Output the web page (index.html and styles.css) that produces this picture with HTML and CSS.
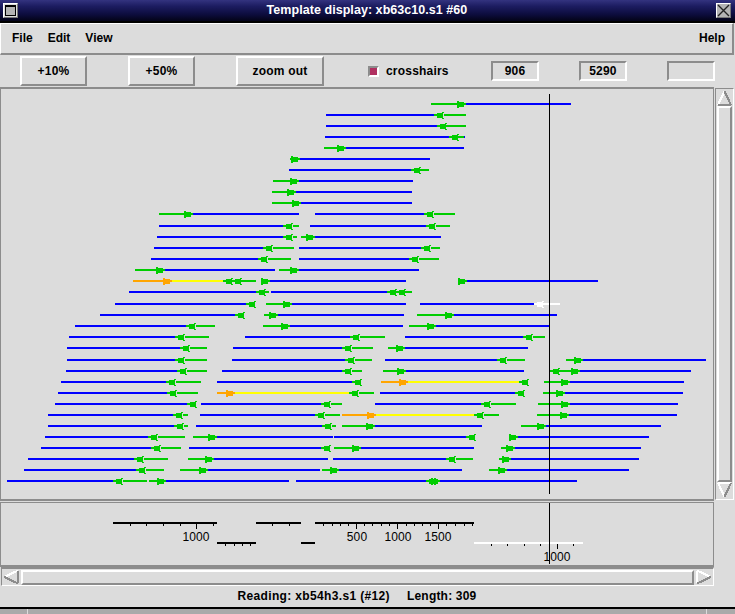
FILE: index.html
```html
<!DOCTYPE html>
<html lang="en">
<head>
<meta charset="utf-8">
<title>Template display: xb63c10.s1 #60</title>
<link rel="stylesheet" href="styles.css">
</head>
<body>
<div class="win">
  <header class="title">
    <span class="wm-btn"><span class="wm-box"></span></span>
    <span class="title-text">Template display: xb63c10.s1 #60</span>
    <span class="wm-close"><svg class="wm-x" viewBox="0 0 13 13"><path d="M1 1L12 12M12 1L1 12"/></svg></span>
  </header>
  <nav class="menu">
    <span class="mi">File</span><span class="mi">Edit</span><span class="mi">View</span>
    <span class="mi help">Help</span>
  </nav>
  <div class="tools">
    <button class="btn b1">+10%</button>
    <button class="btn b1">+50%</button>
    <button class="btn b2">zoom out</button>
    <span class="check"></span>
    <span class="check-label">crosshairs</span>
    <span class="entry">906</span>
    <span class="entry">5290</span>
    <span class="entry"></span>
  </div>
  <div class="main">
    <div class="canvas">
      <div class="plotframe">
      <svg class="plot" viewBox="1 89 712 410" width="712" height="410">
        <defs>
          <path id="r" d="M-9-3H-7V-2H-2V-1H0V1H-2V3H-7V4H-9Z"/>
          <path id="l" d="M0-1H3V-2H8V-3H10V-2H9V3H10V4H8V3H3V1H0Z"/>
        </defs>
        <path class="ln blue" d="M466 104H571M326 115H436M326 126H439M325 137H465M346 148H464M300 159H430M289 170H412M299 181H413M296 192H412M301 203H412M193 214H299M315 214H426M159 226H285M310 226H428M157 237H285M315 237H441M154 248H265M299 248H423M151 259H260M299 259H411M165 270H275M299 270H419M270 281H406M467 281H598M129 292H258M271 292H389M115 304H248M292 304H406M420 304H536M100 315H237M278 315H404M454 315H557M75 326H188M290 326H403M436 326H549M69 337H177M245 337H352M405 337H525M67 348H182M233 348H344M405 348H528M67 360H177M232 360H347M385 360H499M583 360H706M66 371H179M222 371H344M406 371H524M580 371H691M61 382H168M217 382H354M570 382H684M58 393H169M380 393H517M565 393H683M55 404H189M201 404H323M375 404H483M570 404H678M48 415H175M200 415H317M569 415H677M48 426H176M196 426H324M375 426H482M546 426H661M45 437H150M217 437H333M334 437H468M518 437H649M41 448H153M189 448H323M361 448H474M515 448H641M28 459H136M214 459H328M333 459H448M511 459H639M24 470H138M208 470H320M339 470H462M507 470H629M7 481H115M166 481H289M296 481H577"/>
        <path class="ln yellow" d="M172 281H225M235 393H351M408 382H521M376 415H476"/>
        <path class="ln white" d="M536 304H560"/>
        <path class="ln orange" d="M133 281H165M217 393H228M381 382H401M342 415H369"/>
        <path class="ln green" d="M431 104H458M444 115H466M445 126H466M457 137H464M324 148H339M290 159H292M419 170H429M273 181H291M272 192H288M272 203H293M159 214H185M434 214H455M293 226H299M436 226H450M293 237H297M301 237H307M273 248H294M431 248H440M268 259H291M419 259H439M135 270H157M279 270H291M240 281H256M261 281H262M458 281H459M264 292H269M405 292H412M266 304H284M264 315H270M417 315H446M196 326H215M263 326H282M409 326H428M185 337H209M360 337H385M533 337H545M190 348H207M352 348H373M388 348H397M185 360H207M355 360H372M507 360H525M566 360H575M187 371H207M352 371H362M383 371H398M551 371H572M176 382H201M544 382H562M177 393H198M359 393H374M543 393H557M331 404H342M491 404H516M538 404H562M183 415H188M325 415H340M484 415H499M537 415H561M184 426H188M332 426H336M342 426H367M521 426H538M158 437H185M193 437H209M509 437H510M161 448H181M334 448H353M501 448H507M144 459H168M188 459H206M456 459H473M499 459H503M146 470H164M180 470H200M322 470H331M489 470H499M123 481H147M149 481H158"/>
        <g class="ar-green">
          <use href="#r" x="466" y="104"/><use href="#l" x="434" y="115"/><use href="#l" x="437" y="126"/><use href="#l" x="449" y="137"/><use href="#r" x="346" y="148"/><use href="#r" x="300" y="159"/><use href="#l" x="411" y="170"/><use href="#r" x="299" y="181"/><use href="#r" x="296" y="192"/><use href="#r" x="301" y="203"/><use href="#r" x="193" y="214"/><use href="#l" x="424" y="214"/><use href="#l" x="283" y="226"/><use href="#l" x="426" y="226"/><use href="#l" x="283" y="237"/><use href="#r" x="315" y="237"/><use href="#l" x="263" y="248"/><use href="#l" x="421" y="248"/><use href="#l" x="258" y="259"/><use href="#l" x="409" y="259"/><use href="#r" x="165" y="270"/><use href="#r" x="299" y="270"/><use href="#l" x="223" y="281"/><use href="#l" x="232" y="281"/><use href="#r" x="270" y="281"/><use href="#r" x="467" y="281"/><use href="#l" x="256" y="292"/><use href="#l" x="387" y="292"/><use href="#l" x="396" y="292"/><use href="#l" x="246" y="304"/><use href="#r" x="292" y="304"/><use href="#l" x="235" y="315"/><use href="#r" x="278" y="315"/><use href="#r" x="454" y="315"/><use href="#l" x="186" y="326"/><use href="#r" x="290" y="326"/><use href="#r" x="436" y="326"/><use href="#l" x="175" y="337"/><use href="#l" x="350" y="337"/><use href="#l" x="523" y="337"/><use href="#l" x="180" y="348"/><use href="#l" x="342" y="348"/><use href="#r" x="405" y="348"/><use href="#l" x="175" y="360"/><use href="#l" x="345" y="360"/><use href="#l" x="497" y="360"/><use href="#r" x="583" y="360"/><use href="#l" x="177" y="371"/><use href="#l" x="342" y="371"/><use href="#r" x="406" y="371"/><use href="#l" x="550" y="371"/><use href="#r" x="580" y="371"/><use href="#l" x="166" y="382"/><use href="#l" x="352" y="382"/><use href="#l" x="519" y="382"/><use href="#r" x="570" y="382"/><use href="#l" x="167" y="393"/><use href="#l" x="349" y="393"/><use href="#l" x="515" y="393"/><use href="#r" x="565" y="393"/><use href="#l" x="187" y="404"/><use href="#l" x="321" y="404"/><use href="#l" x="481" y="404"/><use href="#r" x="570" y="404"/><use href="#l" x="173" y="415"/><use href="#l" x="315" y="415"/><use href="#l" x="474" y="415"/><use href="#r" x="569" y="415"/><use href="#l" x="174" y="426"/><use href="#l" x="322" y="426"/><use href="#r" x="375" y="426"/><use href="#r" x="546" y="426"/><use href="#l" x="148" y="437"/><use href="#r" x="217" y="437"/><use href="#l" x="466" y="437"/><use href="#r" x="518" y="437"/><use href="#l" x="151" y="448"/><use href="#l" x="321" y="448"/><use href="#r" x="361" y="448"/><use href="#r" x="515" y="448"/><use href="#l" x="134" y="459"/><use href="#r" x="214" y="459"/><use href="#l" x="446" y="459"/><use href="#r" x="511" y="459"/><use href="#l" x="136" y="470"/><use href="#r" x="208" y="470"/><use href="#r" x="339" y="470"/><use href="#r" x="507" y="470"/><use href="#l" x="113" y="481"/><use href="#r" x="166" y="481"/><use href="#l" x="426" y="481"/><use href="#r" x="440" y="481"/>
        </g>
        <g class="ar-orange">
          <use href="#r" x="172" y="281"/><use href="#r" x="235" y="393"/><use href="#r" x="408" y="382"/><use href="#r" x="376" y="415"/>
        </g>
        <g class="ar-white"><use href="#l" x="534" y="304"/></g>
        <path class="cross" d="M549.500 94V494"/>
      </svg>
      </div>
      <div class="vscroll">
        <span class="arrow-btn"><svg class="tri" viewBox="0 0 14 15"><path class="tri-w" d="M7 1L1 14"/><path class="tri-g" d="M7 1L13 14M1 14H13"/></svg></span>
        <span class="vthumb"></span>
        <span class="arrow-btn"><svg class="tri" viewBox="0 0 14 15"><path class="tri-w" d="M1 1H13M1 1L7 14"/><path class="tri-g" d="M13 1L7 14"/></svg></span>
      </div>
    </div>
    <div class="ruler">
      <svg class="plot" viewBox="1 503 712 62" width="712" height="62">
        <path class="rl" d="M113 523H217M256 523H301M315 523H474M217 543H256M301 543H315"/>
        <path class="rl rl-w" d="M474 543H583"/>
        <path class="tk" d="M130.500 524V526M146.500 524V526M163.500 524V526M180.500 524V526M196.500 524V529M213.500 524V526M272.500 524V526M289.500 524V526M323.500 524V526M332.500 524V526M340.500 524V526M348.500 524V526M356.500 524V529M364.500 524V526M372.500 524V526M381.500 524V526M389.500 524V526M397.500 524V529M406.500 524V526M414.500 524V526M422.500 524V526M430.500 524V526M438.500 524V529M446.500 524V526M455.500 524V526M464.500 524V526M472.500 524V526M225.500 544V546M234.500 544V546M242.500 544V546M250.500 544V546M491.500 544V546M507.500 544V546M524.500 544V546M540.500 544V546M557.500 544V549M573.500 544V546"/>
        <text class="rt" x="196" y="541">1000</text>
        <text class="rt" x="357" y="541">500</text>
        <text class="rt" x="398" y="541">1000</text>
        <text class="rt" x="438" y="541">1500</text>
        <text class="rt" x="557" y="561">1000</text>
        <path class="cross" d="M549.500 503V564"/>
      </svg>
    </div>
    <div class="hscroll">
      <span class="arrow-btn"><svg class="tri" viewBox="0 0 15 14"><path class="tri-w" d="M1 7L14 1"/><path class="tri-g" d="M1 7L14 13M14 1V13"/></svg></span>
      <span class="hthumb"></span>
      <span class="arrow-btn"><svg class="tri" viewBox="0 0 15 14"><path class="tri-w" d="M1 1V13M1 1L14 7"/><path class="tri-g" d="M1 13L14 7"/></svg></span>
    </div>
  </div>
  <div class="status"><span class="status-read">Reading: xb54h3.s1 (#12)</span><span class="status-gap"></span>Length: 309</div>
  <footer class="grip"><span class="g1"></span><span class="g2"></span><span class="g3"></span></footer>
</div>
</body>
</html>
```

FILE: styles.css
```css
* { box-sizing: border-box; }
html, body { margin: 0; padding: 0; }
body { background: #dcdcdc; overflow: hidden; }
.win {
  width: 735px; height: 614px; display: flex; flex-direction: column;
  background: #dcdcdc; color: #000;
  font: bold 12px/14px "Liberation Sans", Arial, sans-serif;
  letter-spacing: .2px;
}
.title {
  height: 23px; flex: none; display: flex; align-items: center; padding: 0 4px 1px 3px;
  background: linear-gradient(#33337f 0, #1c1c60 30%, #0c0c3c 70%, #04041c 95%);
  border-bottom: 2px solid #000; color: #fff; font-size: 12.5px; letter-spacing: .05px;
}
.wm-btn { width: 15px; height: 15px; background: #dcdcdc; border: 1px solid; border-color: #fff #777 #777 #fff; padding: 1px; display: flex; }
.wm-box { flex: 1; background: #b4b4b4; border: 1px solid #000; border-top-width: 2px; }
.title-text { flex: 1; text-align: center; }
.wm-close { width: 15px; height: 15px; background: #b4b4b4; border: 1px solid; border-color: #fff #777 #777 #fff; display: flex; }
.wm-x { width: 13px; height: 13px; }
.wm-x path { stroke: #222; stroke-width: 1.4; fill: none; }

.menu {
  height: 32px; flex: none; display: flex; align-items: center; padding: 0 7px 1px 11px;
  border-top: 1px solid #fff; border-left: 1px solid #fff; border-bottom: 2px solid #8c8c8c; border-right: 2px solid #8c8c8c;
  margin-right: 1px; gap: 15px; letter-spacing: 0;
}
.help { margin-left: auto; }

.tools { height: 32px; flex: none; display: flex; align-items: center; padding: 0 0 0 20px; }
.tools > * { flex: none; }
.btn {
  height: 30px; margin: 0 41px 0 0; padding: 0; background: #dcdcdc; color: #000;
  font: inherit; letter-spacing: inherit; border: 2px solid; border-color: #fff #8c8c8c #8c8c8c #fff;
}
.b1 { width: 67px; }
.b2 { width: 88px; margin-right: 44px; }
.check { width: 11px; height: 11px; background: #b03060; border: 2px solid; border-color: #8c8c8c #fff #fff #8c8c8c; }
.check-label { margin-left: 7px; width: 105px; }
.entry {
  width: 48px; height: 20px; margin-right: 40px; text-align: center; line-height: 16px;
  border: 2px solid; border-color: #8c8c8c #fff #fff #8c8c8c;
}

.main { flex: none; display: flex; flex-direction: column; }
.canvas { display: flex; height: 414px; flex: none; }
.plotframe {
  width: 714px; height: 414px; flex: none;
  border: solid #8c8c8c; border-width: 2px 1px;
}
.plot { display: block; shape-rendering: crispEdges; }
.ln { fill: none; stroke-width: 2; }
.blue { stroke: #0000ff; }
.yellow { stroke: #ffff00; }
.white { stroke: #fff; }
.orange { stroke: #ffa500; }
.green { stroke: #00cd00; }
.ar-green { fill: #00cd00; }
.ar-orange { fill: #ffa500; }
.ar-white { fill: #fff; }
.cross { stroke: #000; stroke-width: 1; fill: none; }

.vscroll {
  width: 19px; height: 412px; margin: 1px 0 0 1px; flex: none; padding: 1px;
  display: flex; flex-direction: column;
  border: 1px solid; border-color: #8c8c8c #fff #fff #8c8c8c;
}
.arrow-btn { flex: none; display: block; width: 15px; height: 16px; }
.tri { display: block; width: 100%; height: 100%; shape-rendering: crispEdges; }
.tri path { fill: none; stroke-width: 2; }
.tri-w { stroke: #fff; }
.tri-g { stroke: #8c8c8c; }
.vthumb { flex: 1; border: 2px solid; border-color: #fff #8c8c8c #8c8c8c #fff; }

.ruler {
  margin-top: 1px; width: 714px; height: 65px; flex: none;
  border: solid #8c8c8c; border-width: 1px 1px 2px;
}
.rl { stroke: #000; stroke-width: 2; fill: none; }
.rl-w { stroke: #fff; }
.tk { stroke: #000; stroke-width: 1; fill: none; }
.rt { font: 400 12px "Liberation Sans", sans-serif; text-anchor: middle; fill: #000; letter-spacing: .1px; }

.hscroll {
  width: 713px; height: 19px; margin-left: 1px; flex: none; display: flex; align-items: center; padding: 0 1px;
  border: solid; border-color: #8c8c8c #fff #fff #8c8c8c; border-width: 2px 1px 1px;
}
.hscroll .arrow-btn { width: 16px; }
.hthumb { flex: 1; height: 15px; margin: 0 2px; border: 2px solid; border-color: #fff #8c8c8c #8c8c8c #fff; }

.status { flex: none; height: 21px; text-align: center; line-height: 21px; padding-right: 21px; }
.status-read { letter-spacing: .35px; }
.status-gap { display: inline-block; width: 17px; }

.grip { flex: 1; display: flex; border-top: 2px solid #000; min-height: 0; gap: 1px; }
.grip span { height: 5px; background: #aaa; }
.g1 { width: 27px; }
.g2 { flex: 1; }
.g3 { width: 28px; }
```
